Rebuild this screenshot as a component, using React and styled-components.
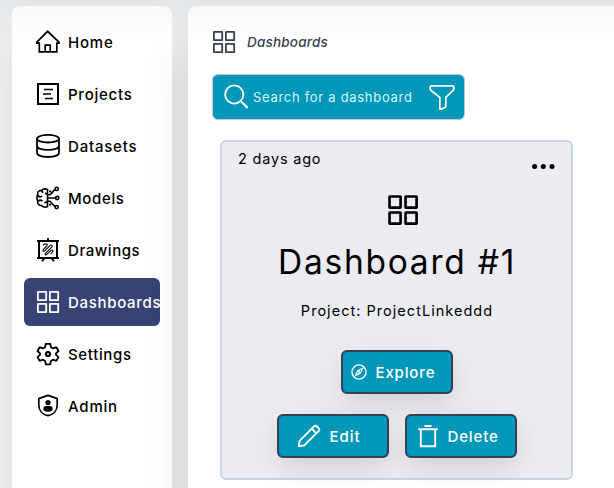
import React from "react";
import styled, { createGlobalStyle } from "styled-components";

const GlobalStyle = createGlobalStyle`
  *, *::before, *::after { box-sizing: border-box; }
  html, body, #root { height: 100%; }
  body {
    margin: 0;
    overflow: hidden;
    background: #eceff2;
    color: #000;
    font-family: Inter, "Liberation Sans", sans-serif;
  }
  svg { display: block; flex: none; }
`;

const Page = styled.div`
  position: relative;
  display: flex;
  gap: 16px;
  width: 100%;
  height: 100%;
  padding: 6px 0 0 12px;
  overflow: hidden;

  &::after {
    content: "";
    position: absolute;
    inset: 0 0 auto;
    height: 42px;
    background: linear-gradient(rgba(0, 0, 0, 0.035), rgba(0, 0, 0, 0.015) 50%, transparent);
    pointer-events: none;
  }
`;

const Sidebar = styled.nav`
  display: flex;
  flex-direction: column;
  flex: none;
  gap: 4px;
  width: 160px;
  height: 600px;
  padding: 12px;
  border-radius: 8px;
  background: #fff;
  box-shadow: 0 25px 50px -12px rgba(0, 0, 0, 0.1);
`;

const NavItem = styled.a`
  display: flex;
  align-items: center;
  gap: 8px;
  height: 48px;
  padding-left: 12px;
  border-radius: 6px;
  overflow: hidden;
  background: ${(p) => (p.$active ? "#374375" : "transparent")};
  color: ${(p) => (p.$active ? "#fff" : "#000")};
`;

const Label = styled.span`
  padding-top: ${(p) => p.$drop || 0}px;
  font-size: ${(p) => p.$size || 15}px;
  font-weight: ${(p) => p.$weight || 500};
  line-height: 24px;
  letter-spacing: ${(p) => p.$track || 0}px;
  white-space: nowrap;
`;

const Main = styled.main`
  flex: none;
  width: 700px;
  height: 600px;
  padding: 24px;
  border-radius: 8px;
  background: #fff;
  box-shadow: 0 25px 50px -12px rgba(0, 0, 0, 0.2);
`;

const Breadcrumb = styled.header`
  display: flex;
  align-items: center;
  gap: 11px;
  height: 24px;
  color: #374151;
  font-style: italic;
`;

const SearchBar = styled.div`
  display: flex;
  align-items: center;
  width: 253px;
  height: 46px;
  margin-top: 20px;
  padding: 0 9px;
  border: 1px solid #b9ccda;
  border-radius: 6px;
  background: #0097b8;
  color: #fff;
`;

const Placeholder = styled.span`
  flex: 1;
  margin-left: 3px;
  color: #d9f5fa;
  font-size: 13px;
  letter-spacing: ${(p) => p.$track}px;
  white-space: nowrap;
`;

const Card = styled.article`
  display: flex;
  flex-direction: column;
  align-items: center;
  width: 353px;
  height: 340px;
  margin: 20px 0 0 8px;
  border: 2px solid #cbd5e1;
  border-radius: 6px;
  background: #ebecf2;
`;

const CardTop = styled.div`
  display: flex;
  justify-content: space-between;
  width: 100%;
  height: 52px;
  padding: 5px 16px 0;
`;

const Menu = styled.button`
  height: 24px;
  margin-top: 7px;
  padding: 0;
  border: 0;
  background: none;
`;

const CardIcon = styled.div`
  padding-left: 12px;
`;

const Title = styled.h1`
  margin: 12px 0 0;
  padding-left: 1px;
  font-size: 33.5px;
  font-weight: 400;
  line-height: 48px;
  letter-spacing: ${(p) => p.$track}px;
  white-space: nowrap;
`;

const Project = styled.div`
  margin: 13px 0 27px;
  height: 24px;
  padding-left: 1px;
`;

const Actions = styled.div`
  display: flex;
  gap: 16px;
  margin-bottom: 20px;
`;

const Button = styled.button`
  display: flex;
  align-items: center;
  gap: ${(p) => p.$gap}px;
  width: 112px;
  height: 44px;
  padding: 0 0 0 ${(p) => p.$inset}px;
  border: 2px solid #334155;
  border-radius: 6px;
  background: #0097b8;
  box-shadow: 0 10px 30px -4px rgba(0, 0, 0, 0.15);
  color: #fff;
  font-family: inherit;
`;

function Icon({ size = 24, sw = 1.5, children }) {
  return (
    <svg width={size} height={size} viewBox="0 0 24 24" fill="none" stroke="currentColor" strokeWidth={sw}>
      {children}
    </svg>
  );
}

const HomeIcon = () => (
  <Icon sw={1.7}>
    <path d="M.8 12.2 11.6 1.3 23 12.2v.9h-2.2v8.7H3.3v-8.7H.8ZM9.2 21.8v-6.6h5v6.6" />
  </Icon>
);

const ProjectIcon = () => (
  <Icon sw={2}>
    <path d="M2 2h20v20H2Z" />
    <path d="M8 7.5h9M7 12h8M9 16.5h8" strokeWidth="1.5" />
  </Icon>
);

const DatabaseIcon = () => (
  <Icon sw={1.8}>
    <ellipse cx="12" cy="4.7" rx="11" ry="3.8" />
    <path d="M1 4.7v14.4C1 21.5 6 23 12 23s11-1.5 11-3.9V4.7M1 12c0 2.3 5 3.9 11 3.9S23 14.3 23 12" />
  </Icon>
);

const ModelIcon = () => (
  <Icon sw={1.6}>
    <path d="M11.5 3.5C8.7 2 6.1 3.4 5.6 4.5 2.5 4.3 1.4 6.2 1.7 8.6.8 10.7.8 13.3 1.7 15.4 1.3 18 3.1 19.7 5.6 19.5c1.2 1.8 4 2 5.9 1V3.5ZM5.7 4.5 7 6.8M2 9.5c1.2 1.8 3.1 1.8 4.1.4M2 15.3c1.5-1.6 3.2-1.5 4.4-.2M11.5 8.5 9 7M11.5 15.5 8.4 17M11.5 12h8M11.5 8.7H14l2.4-2.3 2.3-3M11.5 15.3H14l4.8 5.2M13 5.4h2.3M13 18.6h2" />
    <circle cx="20.7" cy="2.9" r="1.6" />
    <circle cx="21.2" cy="12" r="1.6" />
    <circle cx="20.7" cy="21.1" r="1.6" />
  </Icon>
);

const DrawingIcon = () => (
  <Icon sw={2}>
    <path d="M1 3h22M1 20h22M3 3v17M21 3v17M12 0v3M8.4 20l-2.2 3.2M15.6 20l2.2 3.2" />
    <path d="M7 7.2c1.8-2.2 5.4-1.4 3.9.6L7.3 11.6c-1 1.5.2 2.2 1.4 1.2l5.2-5.2c1.5-1.3 3 .2 1.8 1.5l-6.2 6.3c-1 1.2.3 2 1.4 1l4.1-4c1.6-1.1 2.6.4 1.4 1.6l-1.8 2.2" strokeWidth="1.1" />
  </Icon>
);

const GridIcon = ({ size = 24, sw = 1.8 }) => (
  <Icon size={size} sw={sw}>
    <rect x="1.9" y="1.9" width="8.3" height="8.3" rx=".3" />
    <rect x="13.9" y="1.9" width="8.3" height="8.3" rx=".3" />
    <rect x="1.9" y="13.9" width="8.3" height="8.3" rx=".3" />
    <rect x="13.9" y="13.9" width="8.3" height="8.3" rx=".3" />
  </Icon>
);

const GearIcon = () => (
  <Icon sw={1.8}>
    <path strokeLinejoin="round" d="M9.8 1.8h4.4l.8 3.4 2 1.2 3.3-1.2 2.2 3.8-2.5 2.3v1.5l2.5 2.3-2.2 3.8-3.3-1.2-2 1.2-.8 3.4H9.8L9 18.9l-2-1.2-3.3 1.2-2.2-3.8L4 12.8v-1.5L1.5 9l2.2-3.8L7 6.4l2-1.2Z" />
    <circle cx="12" cy="12" r="2" strokeWidth="2.2" />
  </Icon>
);

const AdminIcon = () => (
  <Icon sw={1.7}>
    <path d="M12 1.4 21.2 4.6v6.8c0 5-3.7 9-9.2 10.3-5.5-1.3-9.2-5.3-9.2-10.3V4.6Z" strokeLinejoin="round" />
    <circle cx="12" cy="8.5" r="2.6" fill="currentColor" stroke="none" />
    <ellipse cx="12" cy="14.8" rx="4.7" ry="3" fill="currentColor" stroke="none" />
  </Icon>
);

const SearchIcon = () => (
  <Icon size={28}>
    <circle cx="10.5" cy="9.9" r="7.8" />
    <path d="m16 15.5 6 6" strokeWidth="1.9" />
  </Icon>
);

const FunnelIcon = () => (
  <Icon size={26} sw={1.6}>
    <path strokeLinejoin="round" d="M2.2 1.7h19.6q1.1 0 1.1 1.1v1.6q0 .8-.6 1.4l-6.8 6.5v8.2q0 .8-.7 1.1l-3.6 1.8q-1.2.3-1.2-.9v-10.2L1.7 5.8q-.6-.6-.6-1.4V2.8q0-1.1 1.1-1.1Z" />
  </Icon>
);

const DotsIcon = () => (
  <svg width="24" height="24" viewBox="0 0 24 24" fill="currentColor">
    <circle cx="3.6" cy="12.5" r="2.5" />
    <circle cx="12.3" cy="12.5" r="2.5" />
    <circle cx="21" cy="12.5" r="2.5" />
  </svg>
);

const CompassIcon = () => (
  <Icon size={16}>
    <circle cx="12" cy="12" r="10.6" strokeWidth="2" />
    <path d="m17.3 6.7-3.3 7.3-7.3 3.3 3.3-7.3Z" strokeWidth="1.8" />
    <circle cx="12" cy="12" r="1.3" />
  </Icon>
);

const PencilIcon = () => (
  <Icon sw={1.9}>
    <path strokeLinejoin="round" d="M1.8 22.2 2.6 16.8 17.2 2.2q1.2-1.1 2.4 0l2.2 2.2q1.1 1.2 0 2.4L7.2 21.4ZM14.7 4.7l4.6 4.6" />
  </Icon>
);

const TrashIcon = () => (
  <Icon sw={1.9}>
    <path d="M2.2 5.2h19.6M8.5 2h7M4.8 5.2v17h14.4v-17" />
  </Icon>
);

const navItems = [
  { label: "Home", icon: HomeIcon, track: 0.8 },
  { label: "Projects", icon: ProjectIcon, track: 0.75 },
  { label: "Datasets", icon: DatabaseIcon, track: 0.8 },
  { label: "Models", icon: ModelIcon, track: 0.65 },
  { label: "Drawings", icon: DrawingIcon, track: 0.57 },
  { label: "Dashboards", icon: GridIcon, track: 0.7, active: true },
  { label: "Settings", icon: GearIcon, track: 0.65 },
  { label: "Admin", icon: AdminIcon, track: 0.8 },
];

export default function App() {
  return (
    <>
      <GlobalStyle />
      <Page>
        <Sidebar>
          {navItems.map(({ label, icon: NavIcon, track, active }) => (
            <NavItem key={label} $active={active}>
              <NavIcon />
              <Label $track={track} $drop={2}>{label}</Label>
            </NavItem>
          ))}
        </Sidebar>
        <Main>
          <Breadcrumb>
            <GridIcon />
            <Label $size={13.5} $track={0.2}>Dashboards</Label>
          </Breadcrumb>
          <SearchBar>
            <SearchIcon />
            <Placeholder $track={0.7}>Search for a dashboard</Placeholder>
            <FunnelIcon />
          </SearchBar>
          <Card>
            <CardTop>
              <Label $size={14.5} $weight={400} $track={0.8}>2 days ago</Label>
              <Menu aria-label="More options"><DotsIcon /></Menu>
            </CardTop>
            <CardIcon>
              <GridIcon size={32} sw={2} />
            </CardIcon>
            <Title $track={1.75}>Dashboard #1</Title>
            <Project>
              <Label $size={14.5} $weight={400} $track={1.03}>Project: ProjectLinkeddd</Label>
            </Project>
            <Actions>
              <Button $inset={8} $gap={9}>
                <CompassIcon />
                <Label $track={0.85} $drop={2}>Explore</Label>
              </Button>
            </Actions>
            <Actions>
              <Button $inset={18} $gap={9}>
                <PencilIcon />
                <Label $track={1} $drop={2}>Edit</Label>
              </Button>
              <Button $inset={9} $gap={8}>
                <TrashIcon />
                <Label $track={0.85} $drop={2}>Delete</Label>
              </Button>
            </Actions>
          </Card>
        </Main>
      </Page>
    </>
  );
}
